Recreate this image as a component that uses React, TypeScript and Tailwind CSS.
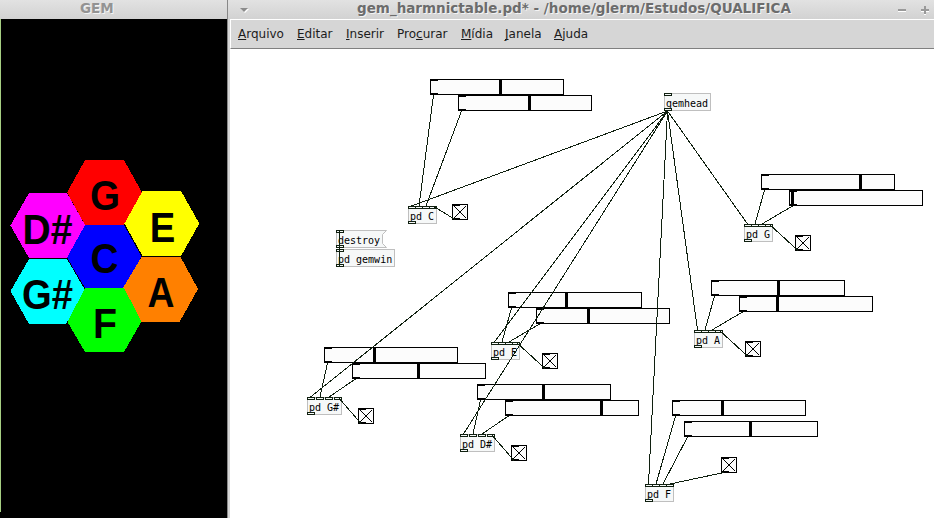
type Point = [number, number];

const hexes: { label: string; fill: string; points: string; x: number; y: number; w: number }[] = [
  { label: "G", fill: "#ff0000", points: "67,192.5 85,160 124,160 142,192.5 124,225 85,225", x: 105, y: 210, w: 30 },
  { label: "D#", fill: "#ff00ff", points: "10.5,225.5 29,193 67,193 85,225 67,258 29,258", x: 47.5, y: 244, w: 50 },
  { label: "E", fill: "#ffff00", points: "124.5,223.5 142.5,191 181,191 199.3,223.5 181,256 142.5,256", x: 162.5, y: 242, w: 25.5 },
  { label: "C", fill: "#0000ff", points: "67,257.5 85,225 124,225 141.5,256.5 124,288 85,288", x: 104.5, y: 273, w: 28 },
  { label: "G#", fill: "#00ffff", points: "10.5,291 29,259 67,259 85,290 66,324 29,324", x: 47.5, y: 309, w: 51 },
  { label: "A", fill: "#ff8000", points: "123,288 141.5,257 180.5,257 198,289 179.5,322 141.5,322", x: 161, y: 307, w: 27 },
  { label: "F", fill: "#00ff00", points: "67.5,322 85,288 124,288 141.5,321.5 124,352 85,352", x: 105, y: 338, w: 24 },
];

// Sliders: x, y, knob x
const sliders: [number, number, number][] = [
  [430, 79, 499], [458, 95, 528],
  [761, 174, 859], [789, 190, 791],
  [711, 280, 777], [739, 296, 776],
  [508, 292, 565], [536, 308, 587],
  [324, 347, 373], [352, 363, 417],
  [477, 384, 542], [505, 400, 600],
  [672, 400, 721], [684, 421, 749],
];

const toggles: Point[] = [[452, 204], [795, 235], [745, 341], [542, 353], [358, 408], [511, 445], [721, 457]];

const four = [0, 7, 14, 21];
const wide = [0, 9, 18, 27];
const objects: { label: string; x: number; y: number; w: number; inlets: number[] }[] = [
  { label: "gemhead", x: 664, y: 93, w: 47, inlets: [0] },
  { label: "pd gemwin", x: 336, y: 249, w: 59, inlets: [0] },
  { label: "pd C", x: 408, y: 206, w: 29, inlets: four },
  { label: "pd G", x: 744, y: 224, w: 29, inlets: four },
  { label: "pd A", x: 694, y: 330, w: 29, inlets: four },
  { label: "pd E", x: 491, y: 342, w: 29, inlets: four },
  { label: "pd F", x: 645, y: 484, w: 29, inlets: four },
  { label: "pd G#", x: 307, y: 397, w: 35, inlets: wide },
  { label: "pd D#", x: 460, y: 434, w: 35, inlets: wide },
];

// Patch cords: x1, y1, x2, y2
const cords: [number, number, number, number][] = [
  [667.5, 111, 411.5, 206], [433.5, 95, 419, 206], [461.5, 111, 426, 206], [455, 219.5, 433, 206],
  [667.5, 111, 747.5, 224], [764.5, 190, 755, 224], [792.5, 206, 762, 224], [798, 250.5, 769, 224],
  [667.5, 111, 697.5, 330], [714.5, 296, 705, 330], [742.5, 312, 712, 330], [748, 356.5, 719, 330],
  [667.5, 111, 494.5, 342], [511.5, 308, 502, 342], [539.5, 324, 509, 342], [545, 368.5, 516, 342],
  [667.5, 111, 310.5, 397], [327.5, 363, 320, 397], [355.5, 379, 329, 397], [361, 423.5, 338, 397],
  [667.5, 111, 463.5, 434], [480.5, 400, 473, 434], [508.5, 416, 482, 434], [514, 460.5, 491, 434],
  [667.5, 111, 648.5, 484], [675.5, 416, 656, 484], [687.5, 437, 663, 484], [724, 472.5, 670, 484],
  [339.5, 231, 339.5, 267],
];

const menu: [string, string, string, string][] = [
  ["", "A", "rquivo", "w-[59px]"],
  ["", "E", "ditar", "w-[49px]"],
  ["", "I", "nserir", "w-[51px]"],
  ["Pro", "c", "urar", "w-[64px]"],
  ["", "M", "ídia", "w-[44px]"],
  ["", "J", "anela", "w-[49px]"],
  ["", "A", "juda", "w-[40px]"],
];

function Port({ x, y }: { x: number; y: number }) {
  return <div className="absolute h-[3px] w-2 border border-[#102010] bg-[#f6f8f8]" style={{ left: x, top: y }} />;
}

function PatchObject({ label, x, y, w, inlets }: (typeof objects)[number]) {
  return (
    <>
      <div
        className="absolute h-[18px] whitespace-pre border border-[#bfbfbf] bg-[#f6f8f8] pl-px text-[10px] leading-[20px] text-black"
        style={{ left: x, top: y, width: w }}
      >
        {label}
      </div>
      {inlets.map((dx) => (
        <Port key={dx} x={x + dx} y={y} />
      ))}
      <Port x={x} y={y + 15} />
    </>
  );
}

function Slider({ x, y, knob }: { x: number; y: number; knob: number }) {
  return (
    <div className="absolute h-4 w-[134px] border border-black bg-[#fcfcfc]" style={{ left: x, top: y }}>
      <div className="absolute left-0 top-0 h-px w-[7px] bg-black" />
      <div className="absolute bottom-0 left-0 h-px w-[7px] bg-black" />
      <div className="absolute inset-y-0 w-[3px] bg-black" style={{ left: knob - x - 1 }} />
    </div>
  );
}

function Toggle({ x, y }: { x: number; y: number }) {
  return (
    <div className="absolute size-4 border border-black bg-[#fcfcfc]" style={{ left: x, top: y }}>
      <div className="absolute left-0 top-0 h-px w-[7px] bg-black" />
      <div className="absolute bottom-0 left-0 h-px w-[7px] bg-black" />
      <svg className="block size-[14px]" viewBox="0 0 14 14" shapeRendering="crispEdges">
        <path d="M1 1L13 13M13 1L1 13" stroke="#000" />
      </svg>
    </div>
  );
}

function GemWindow() {
  return (
    <section className="flex w-[228px] shrink-0 flex-col border-r border-[#888]">
      <header className="h-[19px] bg-linear-to-b from-[#e2e2e2] to-[#d2d2d2] pl-[80px] text-[13.5px] leading-[17px] font-bold text-[#939393] [text-shadow:1px_1px_0_#f4f4f4]">
        GEM
      </header>
      <div className="flex flex-1 bg-black">
        <div className="h-[493px] w-px bg-[#a6cf83]" />
        <svg className="-ml-px block h-[499px] w-[227px]" viewBox="0 19 227 499">
          <g shapeRendering="crispEdges">
            {hexes.map((h) => (
              <polygon key={h.label} points={h.points} fill={h.fill} />
            ))}
          </g>
          <g className="font-['Liberation_Sans',sans-serif] text-[42px] font-bold" textAnchor="middle">
            {hexes.map((h) => (
              <text key={h.label} x={h.x} y={h.y} textLength={h.w} lengthAdjust="spacingAndGlyphs">
                {h.label}
              </text>
            ))}
          </g>
        </svg>
      </div>
    </section>
  );
}

export default function App() {
  return (
    <main className="flex h-[518px] w-[934px] overflow-hidden bg-[#d6d6d6] font-['DejaVu_Sans',sans-serif]">
      <GemWindow />
      <section className="flex min-w-0 flex-1 flex-col">
        <header className="flex h-[19px] shrink-0 items-center bg-linear-to-b from-[#e2e2e2] to-[#d2d2d2]">
          <svg className="ml-3 h-[6px] w-[9px]" viewBox="0 0 9 6">
            <path d="M1 2H9L5 6Z" fill="#fff" />
            <path d="M0 1H8L4 5Z" fill="#8b8b8b" />
          </svg>
          <h1 className="ml-[108px] w-[540px] self-start whitespace-nowrap text-[13.5px] leading-[17px] font-bold text-[#6c6c6c] [text-shadow:1px_1px_0_#f4f4f4]">
            gem_harmnictable.pd* - /home/glerm/Estudos/QUALIFICA
          </h1>
          <svg className="block h-[10px] w-[33px] shrink-0" viewBox="0 0 33 10" shapeRendering="crispEdges">
            <path d="M1 6H9M24 6H32M28 2V10" stroke="#fff" strokeWidth="2" />
            <path d="M1 4.5H9M24 4.5H32M28 1V9" stroke="#999" strokeWidth="2" />
          </svg>
        </header>
        <div className="flex min-h-0 flex-1 flex-col pl-[2px]">
          <nav className="flex h-[30px] shrink-0 border-b border-l border-t border-b-[#808080] border-l-white border-t-white bg-[#d6d6d6] pl-[7px] text-[12px] leading-[28px] text-[#1c1c1c]">
            {menu.map(([pre, key, post, width]) => (
              <span key={key + post} className={`${width} shrink-0`}>
                {pre}
                <span className="underline decoration-1 underline-offset-1 [text-decoration-skip-ink:none]">{key}</span>
                {post}
              </span>
            ))}
          </nav>
          <div className="relative flex-1 overflow-hidden bg-white">
            {/* Patch coordinates are measured from the desktop origin */}
            <div className="absolute -left-[230px] -top-[49px] h-[518px] w-[934px] font-['DejaVu_Sans_Mono',monospace]">
              {sliders.map(([x, y, knob]) => (
                <Slider key={`${x}-${y}`} x={x} y={y} knob={knob} />
              ))}
              {toggles.map(([x, y]) => (
                <Toggle key={`${x}-${y}`} x={x} y={y} />
              ))}
              <div className="absolute left-[336px] top-[230px] h-[18px] w-[51px]">
                <svg className="absolute inset-0 block h-[18px] w-[51px]" viewBox="0 0 51 18">
                  <path d="M.5 .5H50.5L46.5 4.5V13.5L50.5 17.5H.5Z" fill="#f6f8f8" stroke="#bfbfbf" />
                </svg>
                <span className="relative block pl-[2px] pt-px text-[10px] leading-[20px]">destroy</span>
              </div>
              <Port x={336} y={230} />
              <Port x={336} y={245} />
              {objects.map((o) => (
                <PatchObject key={o.label} {...o} />
              ))}
              <svg className="absolute inset-0 block h-[518px] w-[934px]" viewBox="0 0 934 518" shapeRendering="crispEdges">
                {cords.map(([x1, y1, x2, y2]) => (
                  <line key={`${x1}-${y1}-${x2}-${y2}`} x1={x1} y1={y1} x2={x2} y2={y2} stroke="#102010" />
                ))}
              </svg>
            </div>
          </div>
        </div>
      </section>
    </main>
  );
}
